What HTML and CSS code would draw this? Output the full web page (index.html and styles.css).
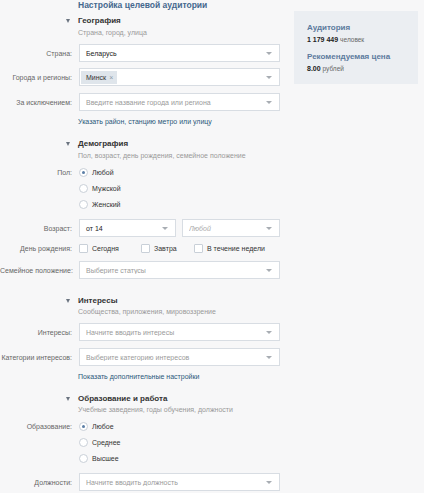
FILE: index.html
```html
<!DOCTYPE html>
<html lang="ru">
<head>
<meta charset="utf-8">
<title>Настройка целевой аудитории</title>
<link rel="stylesheet" href="styles.css">
</head>
<body>
<div class="page">
  <div class="main">
    <div class="title">Настройка целевой аудитории</div>

    <div class="sec-head head-geo"><span class="tri"></span><span class="head-text">География</span></div>
    <div class="sec-sub">Страна, город, улица</div>
    <div class="row mt6">
      <span class="lbl">Страна:</span>
      <div class="field"><span class="val">Беларусь</span><span class="arrow"></span></div>
    </div>
    <div class="row mt6">
      <span class="lbl">Города и регионы:</span>
      <div class="field field-token"><span class="token">Минск <span class="x">×</span></span><span class="arrow"></span></div>
    </div>
    <div class="row mt7">
      <span class="lbl">За исключением:</span>
      <div class="field"><span class="ph">Введите название города или региона</span><span class="arrow"></span></div>
    </div>
    <div class="link-line mt6"><span class="link">Указать район, станцию метро или улицу</span></div>

    <div class="sec-head mt12"><span class="tri"></span><span class="head-text">Демография</span></div>
    <div class="sec-sub">Пол, возраст, день рождения, семейное положение</div>
    <div class="radio-row mt3">
      <span class="lbl">Пол:</span>
      <span class="radio on"></span><span class="opt">Любой</span>
    </div>
    <div class="radio-row">
      <span class="lbl"></span>
      <span class="radio"></span><span class="opt">Мужской</span>
    </div>
    <div class="radio-row">
      <span class="lbl"></span>
      <span class="radio"></span><span class="opt">Женский</span>
    </div>
    <div class="row mt7">
      <span class="lbl">Возраст:</span>
      <div class="pair">
        <div class="field"><span class="val">от 14</span><span class="arrow"></span></div>
        <div class="field"><span class="ph ph-it">Любой</span><span class="arrow"></span></div>
      </div>
    </div>
    <div class="row row-cb mt5">
      <span class="lbl">День рождения:</span>
      <div class="cbs">
        <span class="cb-item cb-w1"><span class="cb"></span><span class="opt">Сегодня</span></span>
        <span class="cb-item cb-w2"><span class="cb"></span><span class="opt">Завтра</span></span>
        <span class="cb-item"><span class="cb"></span><span class="opt">В течение недели</span></span>
      </div>
    </div>
    <div class="row mt7">
      <span class="lbl">Семейное положение:</span>
      <div class="field"><span class="ph">Выберите статусы</span><span class="arrow"></span></div>
    </div>

    <div class="sec-head mt17"><span class="tri"></span><span class="head-text">Интересы</span></div>
    <div class="sec-sub mt1">Сообщества, приложения, мировоззрение</div>
    <div class="row mt6">
      <span class="lbl">Интересы:</span>
      <div class="field"><span class="ph">Начните вводить интересы</span><span class="arrow"></span></div>
    </div>
    <div class="row mt7">
      <span class="lbl">Категории интересов:</span>
      <div class="field"><span class="ph">Выберите категорию интересов</span><span class="arrow"></span></div>
    </div>
    <div class="link-line mt6"><span class="link">Показать дополнительные настройки</span></div>

    <div class="sec-head mt12"><span class="tri"></span><span class="head-text">Образование и работа</span></div>
    <div class="sec-sub mt1">Учебные заведения, годы обучения, должности</div>
    <div class="radio-row mt3">
      <span class="lbl">Образование:</span>
      <span class="radio on"></span><span class="opt">Любое</span>
    </div>
    <div class="radio-row">
      <span class="lbl"></span>
      <span class="radio"></span><span class="opt">Среднее</span>
    </div>
    <div class="radio-row">
      <span class="lbl"></span>
      <span class="radio"></span><span class="opt">Высшее</span>
    </div>
    <div class="row mt7">
      <span class="lbl">Должности:</span>
      <div class="field"><span class="ph">Начните вводить должность</span><span class="arrow"></span></div>
    </div>
  </div>

  <aside class="side">
    <div class="side-title">Аудитория</div>
    <div class="side-val"><b>1 179 449</b> <span class="unit">человек</span></div>
    <div class="side-title side-title2">Рекомендуемая цена</div>
    <div class="side-val"><b>8.00</b> <span class="unit">рублей</span></div>
  </aside>
</div>
</body>
</html>
```

FILE: styles.css
```css
* { box-sizing: border-box; }

html, body {
  margin: 0;
  padding: 0;
  background: #f7f7f8;
}

body {
  font-family: "Liberation Sans", Arial, sans-serif;
  font-size: 7px;
  color: #222;
}

.page {
  display: flex;
  align-items: flex-start;
}

.main {
  width: 280px;
  display: flex;
  flex-direction: column;
}

.title {
  margin-left: 78px;
  height: 11px;
  line-height: 11px;
  font-size: 8.5px;
  font-weight: bold;
  color: #45688e;
  white-space: nowrap;
}

.sec-head {
  display: grid;
  grid-template-columns: 72px 1fr;
  column-gap: 6px;
  height: 10px;
  align-items: center;
  font-size: 8px;
  font-weight: bold;
  color: #333;
}

.head-geo { margin-top: 5px; }

.tri {
  justify-self: end;
  margin-right: 2px;
  width: 0;
  height: 0;
  border-left: 2.5px solid transparent;
  border-right: 2.5px solid transparent;
  border-top: 4px solid #6b7480;
}

.head-text { line-height: 10px; white-space: nowrap; }

.sec-sub {
  margin-left: 78px;
  margin-top: 2px;
  height: 10px;
  line-height: 10px;
  color: #999;
  white-space: nowrap;
}

.row {
  display: grid;
  grid-template-columns: 72px 201px;
  column-gap: 7px;
  align-items: center;
}

.lbl {
  text-align: right;
  color: #666;
  white-space: nowrap;
}

.field {
  height: 18px;
  background: #fff;
  border: 1px solid #d8dde3;
  display: flex;
  align-items: center;
  padding: 0 6px;
  min-width: 0;
}

.val { color: #222; flex: 1; white-space: nowrap; }
.ph { color: #9a9a9a; flex: 1; white-space: nowrap; overflow: hidden; }
.ph-it { font-style: italic; color: #aaa; }

.arrow {
  flex: none;
  width: 0;
  height: 0;
  margin-right: 1px;
  border-left: 3px solid transparent;
  border-right: 3px solid transparent;
  border-top: 3px solid #a8adb3;
}

.field-token { padding-left: 1px; }

.token {
  flex: none;
  height: 13px;
  line-height: 13px;
  padding: 0 4px 0 5px;
  background: #dfe5eb;
  color: #333;
  margin-right: auto;
  white-space: nowrap;
}

.token .x { color: #8c99a6; margin-left: 1px; }

.pair {
  display: grid;
  grid-template-columns: 97px 98px;
  column-gap: 6px;
}

.link-line {
  margin-left: 78px;
  height: 10px;
  line-height: 10px;
}

.link { color: #2b587a; white-space: nowrap; }

.radio-row {
  display: grid;
  grid-template-columns: 72px 9px auto;
  column-gap: 7px;
  height: 16px;
  align-items: center;
}

.radio-row .opt { margin-left: -3px; }

.radio {
  width: 9px;
  height: 9px;
  border-radius: 50%;
  border: 1px solid #c9d0d8;
  background: #fff;
  display: flex;
  align-items: center;
  justify-content: center;
}

.radio.on::after {
  content: "";
  width: 3px;
  height: 3px;
  border-radius: 50%;
  background: #5b7ea6;
}

.opt { color: #333; white-space: nowrap; }

.row-cb { height: 12px; }

.cbs {
  display: flex;
  align-items: center;
}

.cb-item {
  display: flex;
  align-items: center;
  gap: 4px;
}

.cb-w1 { width: 62px; }
.cb-w2 { width: 53px; }

.cb {
  width: 9px;
  height: 9px;
  background: #fff;
  border: 1px solid #c9d0d8;
  border-radius: 1px;
}

.side {
  margin-left: 14px;
  margin-top: 11px;
  width: 124px;
  height: 73px;
  background: #ebeef2;
  padding: 12px 13px 0;
}

.side-title {
  height: 10px;
  line-height: 10px;
  font-size: 8px;
  font-weight: bold;
  color: #5b7a9d;
  white-space: nowrap;
}

.side-title2 { margin-top: 8px; }

.side-val {
  margin-top: 2px;
  height: 9px;
  line-height: 9px;
  color: #222;
  white-space: nowrap;
}

.side-val b { font-size: 7px; }
.unit { color: #666; font-size: 6.5px; }

.mt1 { margin-top: 1px; }
.mt3 { margin-top: 3px; }
.mt5 { margin-top: 5px; }
.mt6 { margin-top: 6px; }
.mt7 { margin-top: 7px; }
.mt12 { margin-top: 12px; }
.mt17 { margin-top: 17px; }
```
